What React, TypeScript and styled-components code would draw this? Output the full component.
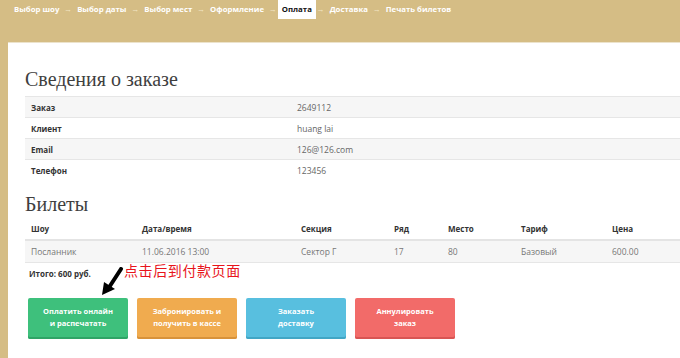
import React from 'react'
import styled, { createGlobalStyle } from 'styled-components'

const GlobalStyle = createGlobalStyle`
  html, body {
    margin: 0;
    padding: 0;
    background: #d5bd85;
    font-family: 'Open Sans', 'Liberation Sans', sans-serif;
  }
`

const steps = [
  'Выбор шоу',
  'Выбор даты',
  'Выбор мест',
  'Оформление',
  'Оплата',
  'Доставка',
  'Печать билетов',
]
const activeStep = 'Оплата'

const orderInfo = [
  ['Заказ', '2649112'],
  ['Клиент', 'huang lai'],
  ['Email', '126@126.com'],
  ['Телефон', '123456'],
]

const ticketCols = [
  { title: 'Шоу', width: 111 },
  { title: 'Дата/время', width: 159 },
  { title: 'Секция', width: 93 },
  { title: 'Ряд', width: 54 },
  { title: 'Место', width: 73 },
  { title: 'Тариф', width: 91 },
  { title: 'Цена' },
]
const tickets = [['Посланник', '11.06.2016 13:00', 'Сектор Г', '17', '80', 'Базовый', '600.00']]

const actions = [
  { label: ['Оплатить онлайн', 'и распечатать'], color: '#3ec07c', shade: '#2fa466' },
  { label: ['Забронировать и', 'получить в кассе'], color: '#f0ab4f', shade: '#d8923a' },
  { label: ['Заказать', 'доставку'], color: '#58bfdf', shade: '#41a6c5' },
  { label: ['Аннулировать', 'заказ'], color: '#f26b69', shade: '#d85553' },
]

const App = () => {
  return (
    <>
      <GlobalStyle />
      <Page>
        <Crumbs>
          {steps.map((s, i) => (
            <React.Fragment key={s}>
              {i > 0 && <Arrow>→</Arrow>}
              <Crumb $active={s === activeStep}>{s}</Crumb>
            </React.Fragment>
          ))}
        </Crumbs>
        <Panel>
          <Heading>Сведения о заказе</Heading>
          <InfoTable>
            <tbody>
              {orderInfo.map(([k, v], i) => (
                <InfoRow key={k} $striped={i % 2 === 0}>
                  <InfoKey>{k}</InfoKey>
                  <InfoValue>{v}</InfoValue>
                </InfoRow>
              ))}
            </tbody>
          </InfoTable>

          <Heading $second>Билеты</Heading>
          <TicketTable>
            <colgroup>
              {ticketCols.map(c => (
                <col key={c.title} width={c.width} />
              ))}
            </colgroup>
            <thead>
              <tr>
                {ticketCols.map(c => (
                  <Th key={c.title}>{c.title}</Th>
                ))}
              </tr>
            </thead>
            <tbody>
              {tickets.map(row => (
                <TicketRow key={row[0]}>
                  {row.map((cell, i) => (
                    <Td key={i}>{cell}</Td>
                  ))}
                </TicketRow>
              ))}
            </tbody>
          </TicketTable>

          <TotalLine>
            <Total>Итого: 600 руб.</Total>
            <Note>
              <NoteArrow width="24" height="30" viewBox="0 0 24 30">
                <path d="M20 2 L7 22" stroke="#000" strokeWidth="4" strokeLinecap="round" />
                <path d="M1 28 L3 15 L14 22 Z" fill="#000" />
              </NoteArrow>
              <NoteText>点击后到付款页面</NoteText>
            </Note>
          </TotalLine>

          <Buttons>
            {actions.map(a => (
              <ActionButton key={a.label[0]} $color={a.color} $shade={a.shade}>
                {a.label[0]}
                <br />
                {a.label[1]}
              </ActionButton>
            ))}
          </Buttons>
          <Footer />
        </Panel>
      </Page>
    </>
  )
}

export default App

const Page = styled.div`
  width: 680px;
  height: 358px;
  overflow: hidden;
  display: flex;
  flex-direction: column;
`

const Crumbs = styled.div`
  display: flex;
  align-items: flex-start;
  height: 42px;
  padding-left: 14px;
  font-size: 7.8px;
  font-weight: 700;
  color: #fff;
  flex-shrink: 0;
`

const Crumb = styled.span<{ $active?: boolean }>`
  padding: 4px ${p => (p.$active ? '4px' : '0')} 5px;
  margin: 0 ${p => (p.$active ? '-4px' : '0')};
  line-height: 10px;
  color: ${p => (p.$active ? '#111' : '#fff')};
  background: ${p => (p.$active ? '#fff' : 'transparent')};
`

const Arrow = styled.span`
  padding: 4px 5px 5px;
  line-height: 10px;
  color: #f3e6c6;
  font-weight: 400;
`

const Panel = styled.div`
  flex: 1;
  margin-left: 8px;
  background: #fff;
  border-top: 1px solid #ece3cc;
  padding: 24px 0 0 17px;
  display: flex;
  flex-direction: column;
`

const Heading = styled.h2<{ $second?: boolean }>`
  margin: ${p => (p.$second ? '11px 0 2px' : '0 0 5px')};
  font-family: 'Liberation Serif', 'DejaVu Serif', serif;
  font-weight: 400;
  font-size: 20px;
  line-height: 24px;
  color: #3f3f3f;
`

const InfoTable = styled.table`
  width: 100%;
  border-collapse: collapse;
  font-size: 8px;
`

const InfoRow = styled.tr<{ $striped: boolean }>`
  height: 21px;
  background: ${p => (p.$striped ? '#f6f6f6' : '#fff')};
  border-top: 1px solid #e6e6e6;
`

const InfoKey = styled.td`
  width: 266px;
  padding: 0 0 0 6px;
  font-weight: 700;
  color: #333;
`

const InfoValue = styled.td`
  padding: 0;
  color: #666;
  font-size: 8.5px;
`

const TicketTable = styled.table`
  width: 100%;
  border-collapse: collapse;
  table-layout: fixed;
  font-size: 8px;
`

const Th = styled.th`
  text-align: left;
  height: 21px;
  padding: 0 0 0 6px;
  font-weight: 700;
  color: #333;
  border-bottom: 2px solid #e4e4e4;
`

const TicketRow = styled.tr`
  background: #f6f6f6;
  border-bottom: 1px solid #e6e6e6;
`

const Td = styled.td`
  height: 21px;
  padding: 0 0 0 6px;
  color: #777;
  font-size: 8.5px;
`

const TotalLine = styled.div`
  display: flex;
  align-items: flex-start;
  height: 35px;
  padding: 3px 0 0 4px;
  box-sizing: border-box;
`

const Total = styled.span`
  font-size: 8px;
  font-weight: 700;
  color: #333;
  margin-top: 2px;
  width: 66px;
`

const Note = styled.div`
  position: relative;
  display: flex;
  align-items: flex-start;
  margin-left: 29px;
`

const NoteArrow = styled.svg`
  position: absolute;
  left: -23px;
  top: 1px;
`

const NoteText = styled.span`
  font-family: 'Noto Sans CJK SC', sans-serif;
  color: #e8141b;
  font-size: 14px;
  line-height: 16px;
  letter-spacing: 0.6px;
  margin-top: -4px;
`

const Buttons = styled.div`
  display: flex;
  gap: 9px;
  padding-left: 3px;
`

const ActionButton = styled.button<{ $color: string; $shade: string }>`
  width: 100px;
  height: 41px;
  border: none;
  border-radius: 2px;
  background: ${p => p.$color};
  box-shadow: inset 0 -2px 0 ${p => p.$shade};
  color: #fff;
  font-family: 'Open Sans', 'Liberation Sans', sans-serif;
  font-weight: 700;
  font-size: 7.5px;
  line-height: 12px;
  padding: 0 0 2px;
  text-align: center;
`

const Footer = styled.div`
  margin-top: 19px;
  border-top: 1px solid #ece6d6;
`
